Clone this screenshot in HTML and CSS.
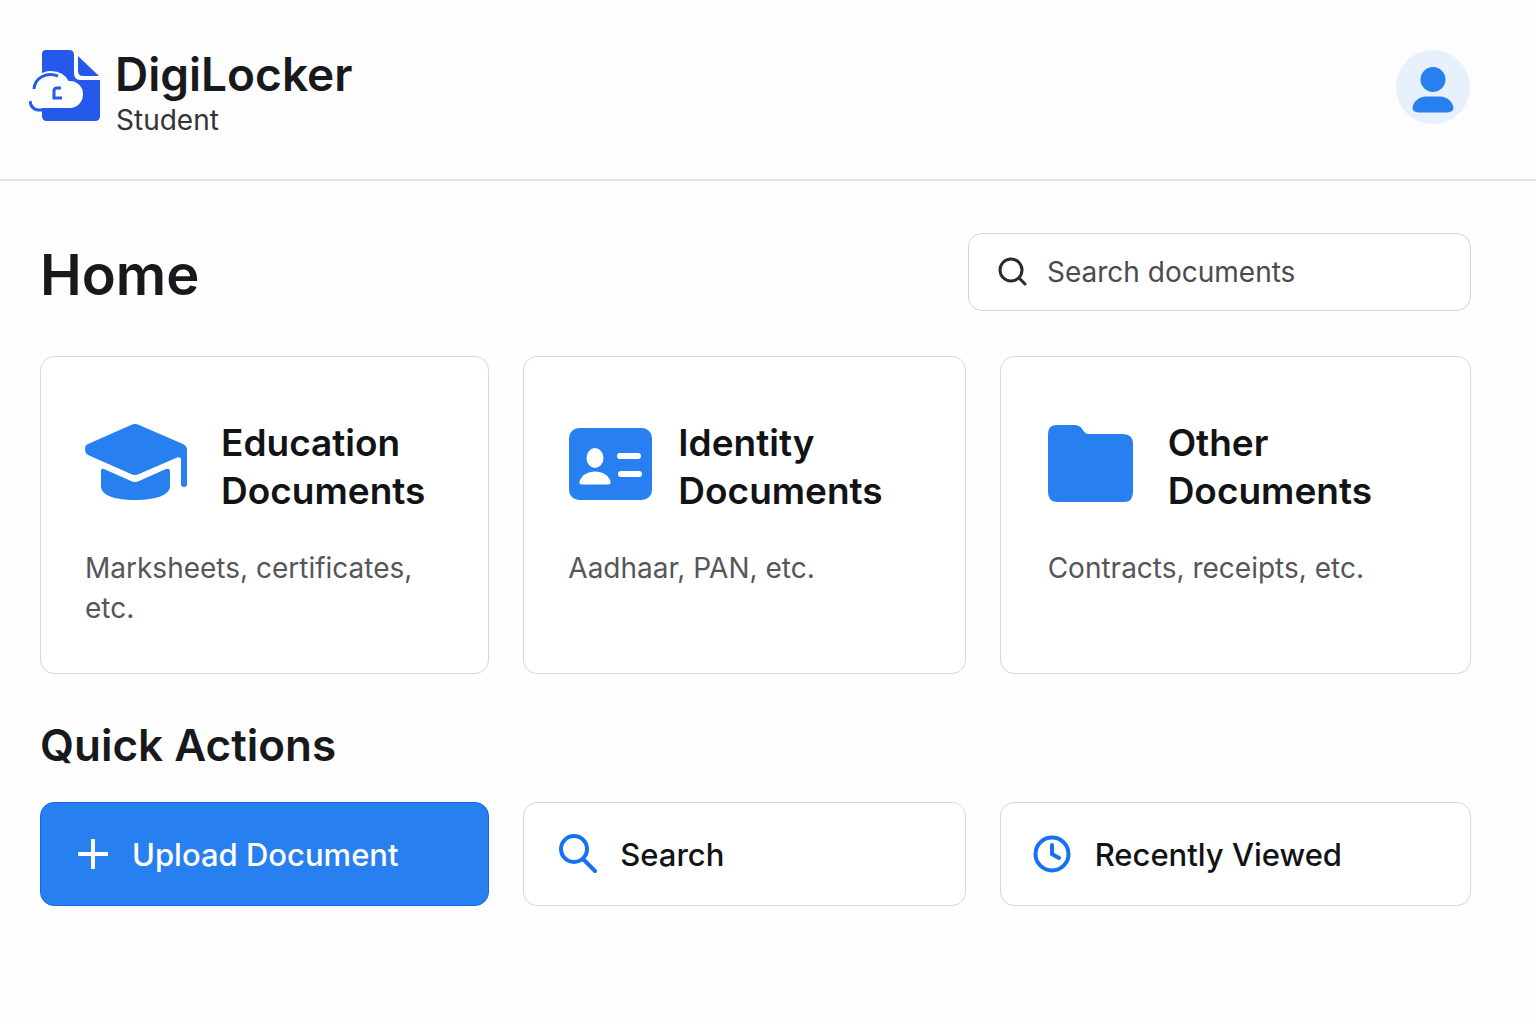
FILE: index.html
```html
<!DOCTYPE html>
<html lang="en">
<head>
<meta charset="utf-8">
<meta name="viewport" content="width=device-width, initial-scale=1">
<title>DigiLocker Student</title>
<link rel="stylesheet" href="styles.css">
</head>
<body>
<header class="topbar">
  <a class="brand" href="#">
    <svg class="brand-logo" viewBox="0 0 72 72" aria-hidden="true">
      <path class="logo-fill" d="M17 0H40Q45 0 45 5V23Q45 30 51 30H71V66Q71 71 66 71H18Q13 71 13 66V4Q13 0 17 0Z"/>
      <path class="logo-fill" d="M49 6L70 26H54Q49 26 49 21Z"/>
      <path class="logo-cloud" d="M5 42C3 30 12 22 22 22C30 22 36 26 39 32C47 31 53 37 53 44C53 52 47 57 41 57H8Q3 56 2 50Z"/>
      <path class="logo-line" d="M5 39C6 27 18 22 29 26"/>
      <path class="logo-line" d="M1 51Q2 59 9 60H14"/>
      <path class="logo-mark" d="M32 38H28Q25 38 25 41V48H33"/>
    </svg>
    <span class="brand-text">
      <span class="brand-name">DigiLocker</span>
      <span class="brand-sub">Student</span>
    </span>
  </a>
  <button class="avatar" type="button" aria-label="Account">
    <svg viewBox="0 0 74 74" aria-hidden="true">
      <circle cx="37" cy="29.500" r="12.500"/>
      <path d="M16.500 58C17 51 24 46.500 30 46.500H44C51 46.500 57 52 57.500 58C57.500 61 54 62.500 50 62.500H24C19 62.500 16.500 61 16.500 58Z"/>
    </svg>
  </button>
</header>

<main class="content">
  <div class="page-head">
    <h1 class="page-title">Home</h1>
    <label class="search">
      <svg class="search-icon" viewBox="0 0 30 30" aria-hidden="true"><circle cx="14" cy="13" r="11"/><path d="M22 21L28 27"/></svg>
      <input class="search-input" type="search" placeholder="Search documents" aria-label="Search documents">
    </label>
  </div>

  <section class="tiles" aria-label="Document categories">
    <a class="card" href="#">
      <span class="card-head">
        <svg class="icon-cap" viewBox="0 0 104 78" aria-hidden="true">
          <path d="M46 1Q50 -1 54 1L98 20Q102 22 102 26V60Q102 63 99 63T96 60V35Q95 32 91 34L54 50Q50 52 46 50L3 31Q0 29 0 25T3 20Z"/>
          <path d="M16 47Q16 44 19 45L46 57Q50 59 54 57L81 45Q85 44 85 47V62C85 71 71 76 50 76S16 71 16 62Z"/>
        </svg>
        <span class="card-title">Education Documents</span>
      </span>
      <span class="card-text">Marksheets, certificates, etc.</span>
    </a>
    <a class="card" href="#">
      <span class="card-head card-head-tight">
        <svg class="icon-id" viewBox="0 0 84 72" aria-hidden="true">
          <rect x="1" width="83" height="72" rx="10"/>
          <g class="icon-cut"><ellipse cx="27" cy="30" rx="8.500" ry="10"/>
          <path d="M11.500 54C13 47 20 43.500 27 43.500S41 47 42.500 54Q43 56.500 40 56.500H14Q11 56.500 11.500 54Z"/>
          <rect x="49" y="25" width="24" height="6" rx="3"/><rect x="50" y="43" width="24" height="6" rx="3"/></g>
        </svg>
        <span class="card-title">Identity Documents</span>
      </span>
      <span class="card-text">Aadhaar, PAN, etc.</span>
    </a>
    <a class="card card-wide" href="#">
      <span class="card-head card-head-loose">
        <svg class="icon-folder" viewBox="0 0 86 78" aria-hidden="true"><path d="M9 1H27C35 1 35 10 40 10H75Q85 10 85 20V68Q85 78 76 78H10Q0 78 0 68V10Q0 1 9 1Z"/></svg>
        <span class="card-title">Other Documents</span>
      </span>
      <span class="card-text">Contracts, receipts, etc.</span>
    </a>
  </section>

  <h2 class="section-title">Quick Actions</h2>
  <div class="tiles">
    <button class="action action-primary" type="button">
      <svg class="icon-plus" viewBox="0 0 32 32" aria-hidden="true"><path d="M15 1V31M0 16H30"/></svg>
      <span>Upload Document</span>
    </button>
    <button class="action" type="button">
      <svg class="icon-find" viewBox="0 0 40 40" aria-hidden="true"><circle cx="16" cy="15" r="13"/><path d="M25 25L37 37"/></svg>
      <span>Search</span>
    </button>
    <button class="action action-recent" type="button">
      <svg class="icon-clock" viewBox="0 0 38 38" aria-hidden="true"><circle cx="19" cy="19" r="16.500"/><path d="M19 10V19L26 23"/></svg>
      <span>Recently Viewed</span>
    </button>
  </div>
</main>
</body>
</html>
```
FILE: styles.css
```css
*, *::before, *::after { box-sizing: border-box; }

body {
  margin: 0;
  background: #fefefe;
  color: #17191c;
  font-family: Inter, "Liberation Sans", sans-serif;
}

a { color: inherit; text-decoration: none; }
button, input { font: inherit; color: inherit; }
svg { display: block; flex: none; }

.topbar {
  display: flex;
  justify-content: space-between;
  align-items: flex-start;
  padding: 50px 66px 37px 29px;
  background: #fdfdfd;
  border-bottom: 2px solid #e2e3e4;
}

.brand { display: flex; gap: 14px; }
.brand-logo { width: 72px; height: 72px; }
.logo-fill { fill: #2459ec; }
.logo-cloud { fill: #fdfdfd; stroke: #fdfdfd; stroke-width: 2; }
.logo-line, .logo-mark { fill: none; stroke: #2459ec; stroke-width: 3; }
.brand-text { display: flex; flex-direction: column; }
.brand-name { font-size: 46px; line-height: 48px; font-weight: 600; }
.brand-sub { padding-left: 1px; font-size: 28px; line-height: 44px; color: #333437; }

.avatar {
  width: 74px;
  height: 74px;
  padding: 0;
  border: 0;
  border-radius: 50%;
  background: #e7f1fc;
  fill: #2880f0;
}

.content { padding: 52px 65px 40px 40px; }

.page-head {
  display: flex;
  justify-content: space-between;
  align-items: center;
  gap: 34px;
  margin-bottom: 45px;
}
.page-title { margin: 0; padding-top: 6px; font-size: 56px; line-height: 72px; font-weight: 600; }

.search {
  display: flex;
  align-items: center;
  gap: 20px;
  flex: 0 1 503px;
  min-width: 0;
  height: 78px;
  padding: 0 28px;
  border: 1px solid #d3d4d6;
  border-radius: 14px;
  background: #fff;
}
.search-icon { width: 30px; height: 30px; fill: none; stroke: #2a2b2d; stroke-width: 3; stroke-linecap: round; }
.search-input { flex: 1; min-width: 0; padding: 0; border: 0; outline: 0; background: none; font-size: 28px; }
.search-input::placeholder { color: #4a4b4d; opacity: 1; }

.tiles {
  display: grid;
  grid-template-columns: 449fr 442fr 471fr;
  gap: 34px;
}

.card {
  display: flex;
  flex-direction: column;
  gap: 33px;
  min-height: 318px;
  padding: 62px 44px 44px;
  border: 1px solid #d6d7d9;
  border-radius: 14px;
  background: #fff;
}
.card-wide { padding-left: 47px; }
.card-head { display: flex; gap: 32px; }
.card-head-tight { gap: 26px; }
.card-head-loose { gap: 34px; }
.card-head svg { margin-top: 5px; fill: #2880f0; }
.card-head .icon-cut { fill: #fff; }
.icon-cap { width: 104px; height: 78px; }
.icon-id { width: 84px; height: 80px; }
.icon-folder { width: 86px; height: 78px; }
.card-title { color: #121315; font-size: 37px; line-height: 48px; font-weight: 600; }
.card-text { font-size: 28px; line-height: 40px; color: #55565a; }

.section-title { margin: 43px 0 28px; font-size: 44px; line-height: 57px; font-weight: 600; }

.action {
  display: flex;
  align-items: center;
  gap: 22px;
  min-height: 104px;
  padding: 0 34px;
  border: 1px solid #d6d7d9;
  border-radius: 14px;
  background: #fff;
  color: #121315;
  font-size: 31px;
  font-weight: 500;
}
.action svg { fill: none; stroke: #1672f3; stroke-width: 4; stroke-linecap: round; }
.action-primary { padding: 0 37px; border-color: #0b68ef; background: #2880f0; color: #fff; }
.action-recent { gap: 24px; padding: 0 32px; }
.action .icon-plus { width: 32px; height: 32px; stroke: #fff; stroke-linecap: butt; }
.icon-find { width: 40px; height: 40px; }
.icon-clock { width: 38px; height: 38px; }
```
